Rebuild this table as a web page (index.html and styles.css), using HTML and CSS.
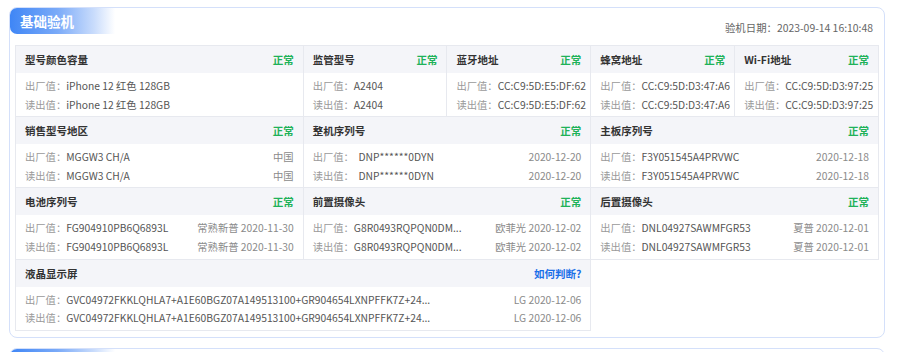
FILE: index.html
```html
<!DOCTYPE html>
<html lang="zh-CN">
<head>
<meta charset="utf-8">
<title>基础验机</title>
<link rel="stylesheet" href="styles.css">
</head>
<body>
<div class="page">
  <section class="card">
    <div class="card-head">
      <div class="tab">基础验机</div>
      <div class="date">验机日期：2023-09-14 16:10:48</div>
    </div>
    <div class="grid">
      <div class="cell span2">
        <div class="cell-head"><span class="title">型号颜色容量</span><span class="ok">正常</span></div>
        <div class="cell-body">
          <div class="line"><span class="lbl">出厂值：</span><span class="val">iPhone 12 红色 128GB</span></div>
          <div class="line"><span class="lbl">读出值：</span><span class="val">iPhone 12 红色 128GB</span></div>
        </div>
      </div>
      <div class="cell">
        <div class="cell-head"><span class="title">监管型号</span><span class="ok">正常</span></div>
        <div class="cell-body">
          <div class="line"><span class="lbl">出厂值：</span><span class="val">A2404</span></div>
          <div class="line"><span class="lbl">读出值：</span><span class="val">A2404</span></div>
        </div>
      </div>
      <div class="cell">
        <div class="cell-head"><span class="title">蓝牙地址</span><span class="ok">正常</span></div>
        <div class="cell-body">
          <div class="line"><span class="lbl">出厂值：</span><span class="val">CC:C9:5D:E5:DF:62</span></div>
          <div class="line"><span class="lbl">读出值：</span><span class="val">CC:C9:5D:E5:DF:62</span></div>
        </div>
      </div>
      <div class="cell">
        <div class="cell-head"><span class="title">蜂窝地址</span><span class="ok">正常</span></div>
        <div class="cell-body">
          <div class="line"><span class="lbl">出厂值：</span><span class="val">CC:C9:5D:D3:47:A6</span></div>
          <div class="line"><span class="lbl">读出值：</span><span class="val">CC:C9:5D:D3:47:A6</span></div>
        </div>
      </div>
      <div class="cell">
        <div class="cell-head"><span class="title">Wi-Fi地址</span><span class="ok">正常</span></div>
        <div class="cell-body">
          <div class="line"><span class="lbl">出厂值：</span><span class="val">CC:C9:5D:D3:97:25</span></div>
          <div class="line"><span class="lbl">读出值：</span><span class="val">CC:C9:5D:D3:97:25</span></div>
        </div>
      </div>

      <div class="cell span2">
        <div class="cell-head"><span class="title">销售型号地区</span><span class="ok">正常</span></div>
        <div class="cell-body">
          <div class="line"><span class="lbl">出厂值：</span><span class="val">MGGW3 CH/A</span><span class="extra">中国</span></div>
          <div class="line"><span class="lbl">读出值：</span><span class="val">MGGW3 CH/A</span><span class="extra">中国</span></div>
        </div>
      </div>
      <div class="cell span2">
        <div class="cell-head"><span class="title">整机序列号</span><span class="ok">正常</span></div>
        <div class="cell-body">
          <div class="line"><span class="lbl">出厂值：</span><span class="val">&nbsp; DNP******0DYN</span><span class="extra">2020-12-20</span></div>
          <div class="line"><span class="lbl">读出值：</span><span class="val">&nbsp; DNP******0DYN</span><span class="extra">2020-12-20</span></div>
        </div>
      </div>
      <div class="cell span2">
        <div class="cell-head"><span class="title">主板序列号</span><span class="ok">正常</span></div>
        <div class="cell-body">
          <div class="line"><span class="lbl">出厂值：</span><span class="val">F3Y051545A4PRVWC</span><span class="extra">2020-12-18</span></div>
          <div class="line"><span class="lbl">读出值：</span><span class="val">F3Y051545A4PRVWC</span><span class="extra">2020-12-18</span></div>
        </div>
      </div>

      <div class="cell span2">
        <div class="cell-head"><span class="title">电池序列号</span><span class="ok">正常</span></div>
        <div class="cell-body">
          <div class="line"><span class="lbl">出厂值：</span><span class="val">FG904910PB6Q6893L</span><span class="extra">常熟新普 2020-11-30</span></div>
          <div class="line"><span class="lbl">读出值：</span><span class="val">FG904910PB6Q6893L</span><span class="extra">常熟新普 2020-11-30</span></div>
        </div>
      </div>
      <div class="cell span2">
        <div class="cell-head"><span class="title">前置摄像头</span><span class="ok">正常</span></div>
        <div class="cell-body">
          <div class="line"><span class="lbl">出厂值：</span><span class="val">G8R0493RQPQN0DM...</span><span class="extra">欧菲光 2020-12-02</span></div>
          <div class="line"><span class="lbl">读出值：</span><span class="val">G8R0493RQPQN0DM...</span><span class="extra">欧菲光 2020-12-02</span></div>
        </div>
      </div>
      <div class="cell span2">
        <div class="cell-head"><span class="title">后置摄像头</span><span class="ok">正常</span></div>
        <div class="cell-body">
          <div class="line"><span class="lbl">出厂值：</span><span class="val">DNL04927SAWMFGR53</span><span class="extra">夏普 2020-12-01</span></div>
          <div class="line"><span class="lbl">读出值：</span><span class="val">DNL04927SAWMFGR53</span><span class="extra">夏普 2020-12-01</span></div>
        </div>
      </div>

      <div class="cell span4">
        <div class="cell-head"><span class="title">液晶显示屏</span><span class="link">如何判断?</span></div>
        <div class="cell-body">
          <div class="line"><span class="lbl">出厂值：</span><span class="val">GVC04972FKKLQHLA7+A1E60BGZ07A149513100+GR904654LXNPFFK7Z+24...</span><span class="extra">LG 2020-12-06</span></div>
          <div class="line"><span class="lbl">读出值：</span><span class="val">GVC04972FKKLQHLA7+A1E60BGZ07A149513100+GR904654LXNPFFK7Z+24...</span><span class="extra">LG 2020-12-06</span></div>
        </div>
      </div>
    </div>
  </section>
  <section class="card">
    <div class="card-head">
      <div class="tab"></div>
    </div>
  </section>
</div>
</body>
</html>
```

FILE: styles.css
```css
* { box-sizing: border-box; }
html, body { margin: 0; padding: 0; background: #ffffff; }
body {
  font-family: "Noto Sans CJK SC", "Noto Sans", sans-serif;
  color: #333;
}
.page {
  padding: 7px 15px 0 9px;
  display: flex;
  flex-direction: column;
  gap: 10px;
}
.card {
  border: 1px solid #d4e0fa;
  border-radius: 8px;
  background: #fff;
  padding: 0 5px 6px 0;
}
.card-head {
  display: flex;
  justify-content: space-between;
  align-items: flex-start;
  height: 37px;
}
.tab {
  width: 105px;
  height: 26px;
  border-radius: 7px 0 0 7px;
  background: linear-gradient(90deg, #3f86f6 0%, #7aaaf8 45%, #c9dcfc 80%, #ffffff 100%);
  color: #fff;
  font-weight: 700;
  font-size: 13.5px;
  line-height: 26px;
  padding-left: 10px;
}
.date {
  margin-top: 13px;
  font-size: 10.4px;
  line-height: 14px;
  color: #666;
  padding-right: 6px;
}
.grid {
  margin-left: 5px;
  display: grid;
  grid-template-columns: repeat(6, 1fr);
  border-top: 1px solid #e7e9ef;
  border-left: 1px solid #e7e9ef;
}
.cell {
  border-right: 1px solid #e7e9ef;
  border-bottom: 1px solid #e7e9ef;
  min-width: 0;
}
.span2 { grid-column: span 2; }
.span4 { grid-column: span 4; }
.cell-head {
  height: 27px;
  background: #f4f5f9;
  display: flex;
  align-items: center;
  justify-content: space-between;
  padding: 0 9px 0 9px;
  font-size: 10.5px;
  font-weight: 700;
}
.title { color: #333; }
.ok { color: #1fb259; }
.link { color: #1a6fe8; }
.cell-body {
  padding: 4px 6px 2px 9px;
  font-size: 10.3px;
  line-height: 18.6px;
}
.span2 .cell-body, .span4 .cell-body { padding-right: 9px; }
.line {
  display: flex;
  white-space: nowrap;
}
.lbl { color: #9a9a9a; }
.val { color: #555; flex: 1 0 auto; }
.extra { color: #8a8a8a; margin-left: 8px; }
```
